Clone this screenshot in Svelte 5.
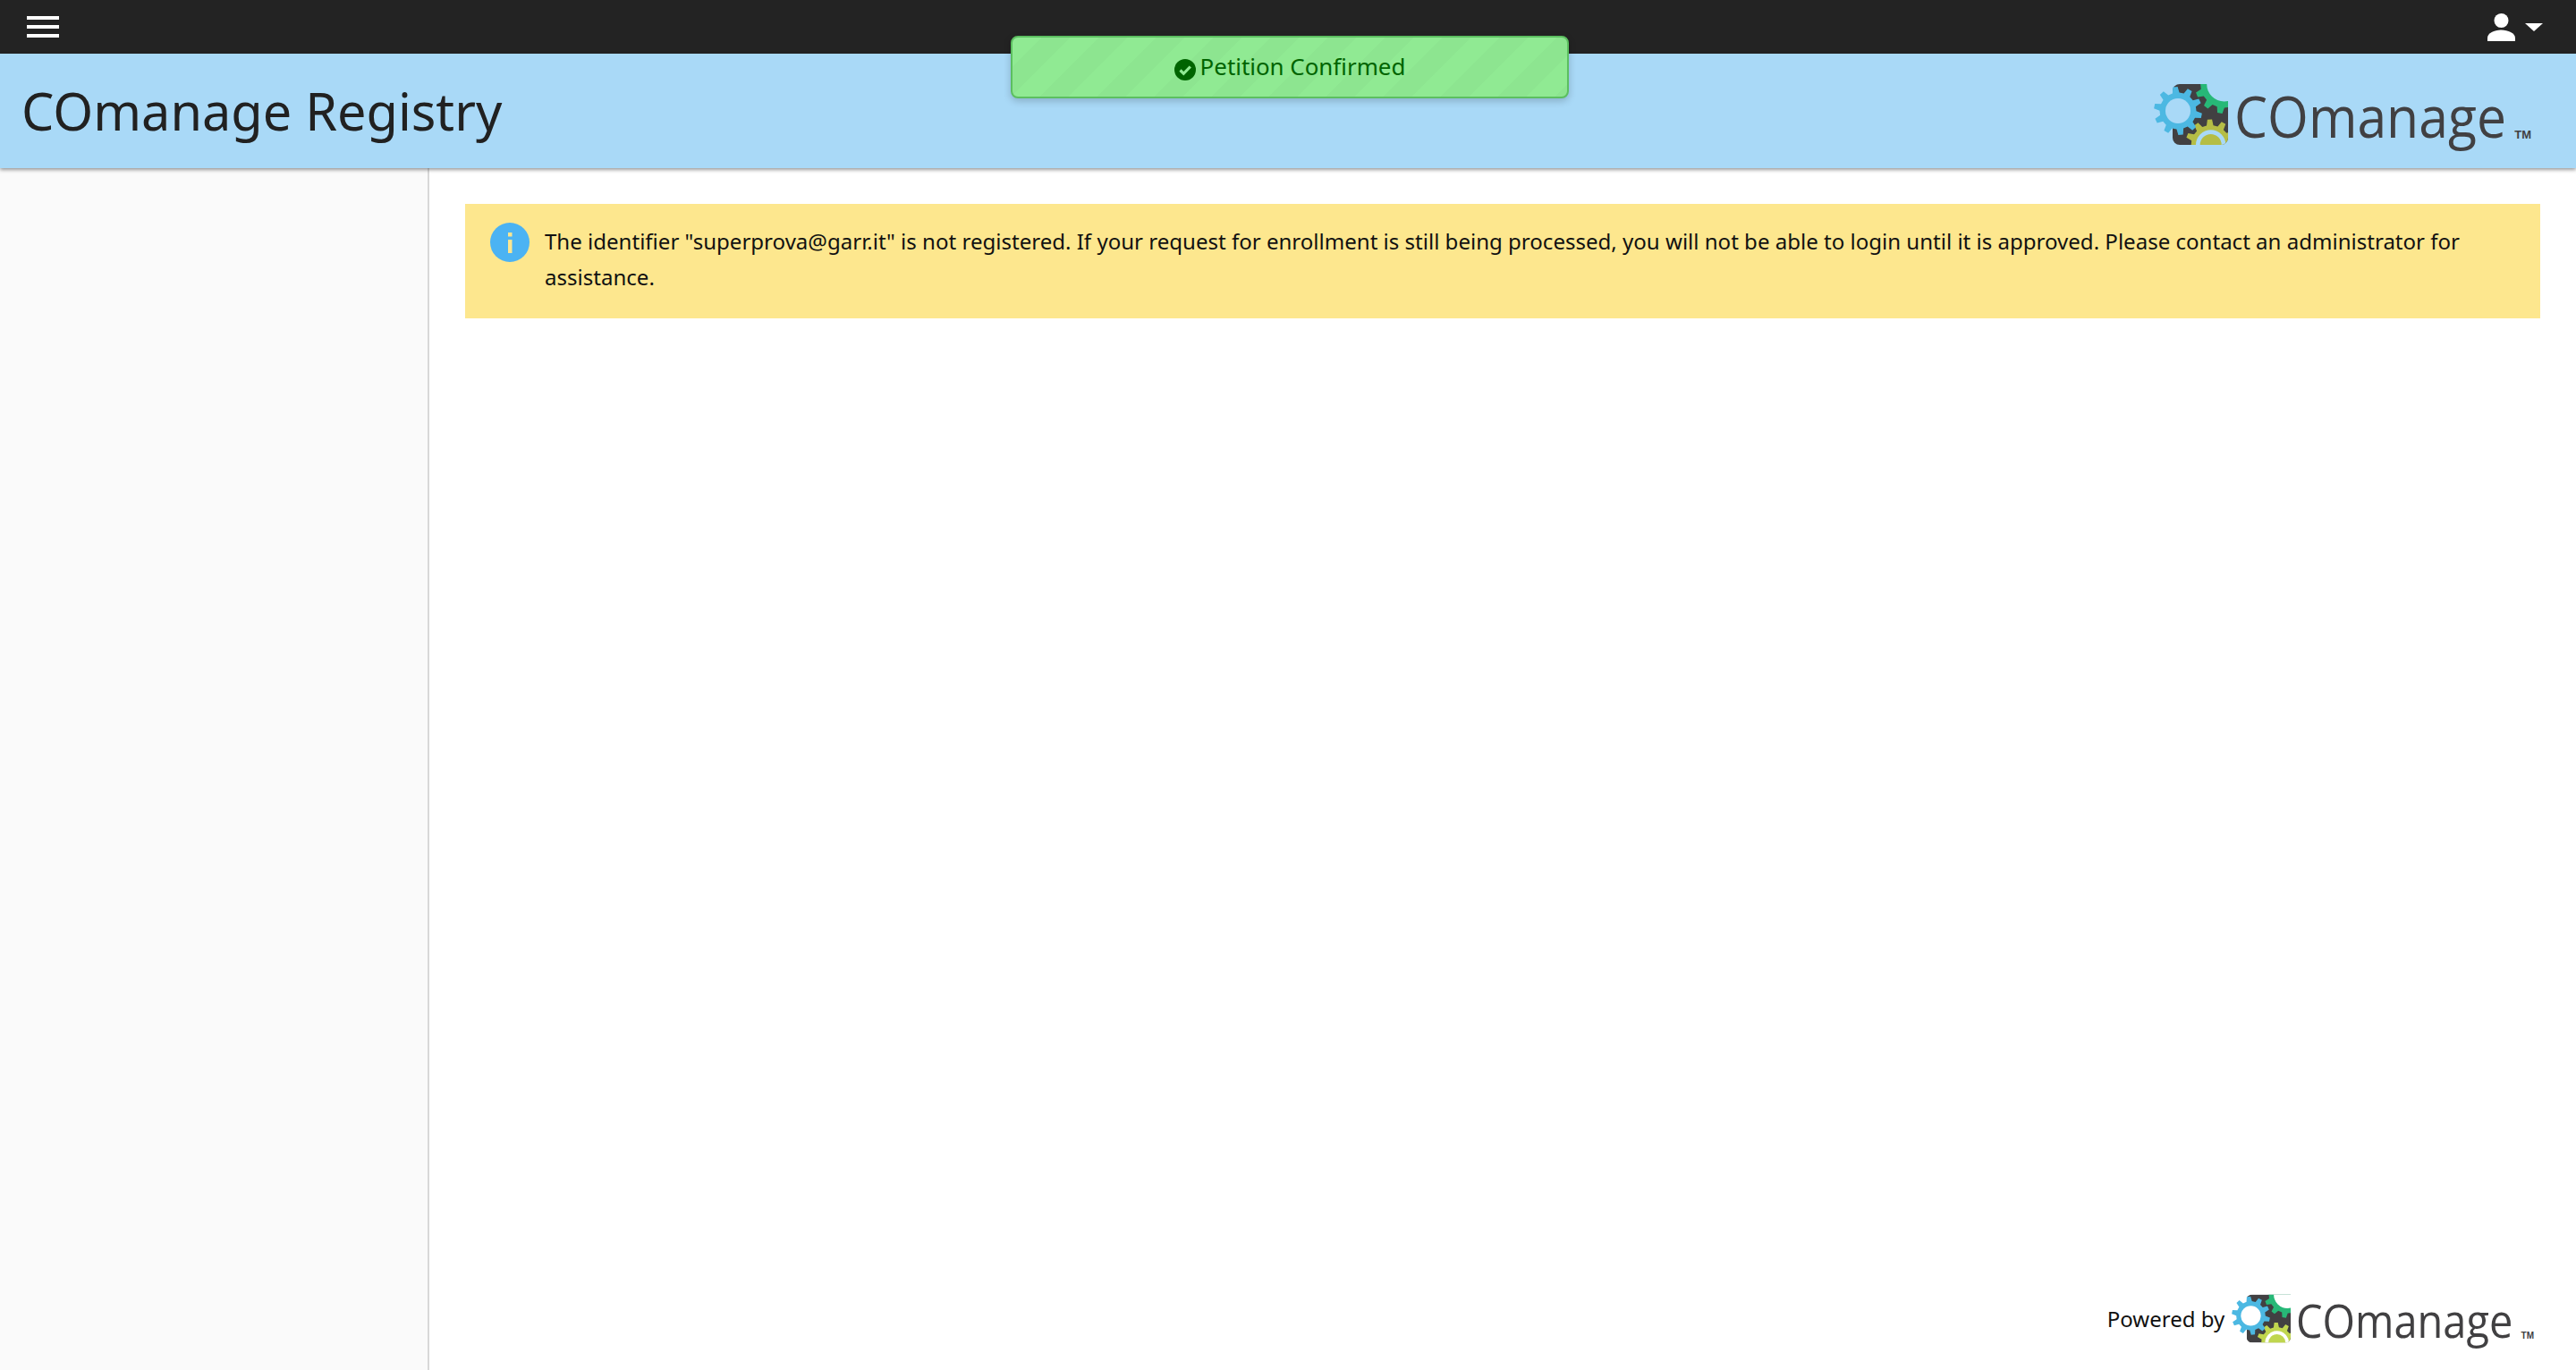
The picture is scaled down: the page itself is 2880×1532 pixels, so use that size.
<script lang="ts">
    // builds a toothed wheel outline for the logo
    function gear(cx: number, cy: number, outer: number, root: number, teeth: number, rot = 0) {
        const pts: string[] = [];
        const step = (Math.PI * 2) / teeth;
        for (let i = 0; i < teeth; i++) {
            const a = rot + i * step;
            const at = [
                [root, -0.3],
                [outer, -0.16],
                [outer, 0.16],
                [root, 0.3],
            ];
            for (const [r, f] of at) {
                const x = cx + r * Math.cos(a + f * step);
                const y = cy + r * Math.sin(a + f * step);
                pts.push(`${x.toFixed(2)},${y.toFixed(2)}`);
            }
        }
        return "M" + pts.join("L") + "Z";
    }

    const blue = gear(27, 30, 27, 20.5, 10, 0.2);
    const green = gear(78.7, 0, 33, 26.5, 12, 0.15);
    const yellow = gear(63.7, 68, 28.5, 22, 11, 0.1);
</script>

{#snippet logo(hole: string, olive: string)}
    <svg class="mark" viewBox="0 0 83 68" aria-hidden="true">
        <defs>
            <clipPath id="mark-clip-{hole.slice(1)}">
                <path d="M29 0H83V60a8 8 0 0 1-8 8H29a8 8 0 0 1-8-8V8a8 8 0 0 1 8-8Z" />
            </clipPath>
        </defs>
        <g clip-path="url(#mark-clip-{hole.slice(1)})">
            <rect x="21" y="0" width="62" height="68" fill="#414042" />
            <path d={green} fill="#27b877" />
            <circle cx="78.7" cy="0" r="19.5" fill={hole} />
            <path d={yellow} fill={olive} />
            <circle cx="63.7" cy="68" r="16.7" fill={hole} />
            <circle cx="63.7" cy="68" r="12" fill={olive} />
        </g>
        <path d={blue} fill="#4cb8e2" />
        <circle cx="27" cy="30" r="14" fill={hole} />
    </svg>
{/snippet}

<div class="page">
    <div class="topbar">
        <button class="menu" aria-label="Menu">
            <span></span><span></span><span></span>
        </button>
        <button class="user" aria-label="User menu">
            <svg class="person" viewBox="0 0 31 31" aria-hidden="true">
                <circle cx="15.5" cy="8" r="8" fill="#fff" />
                <path d="M0 31v-3.5C0 22 8 18.5 15.5 18.5S31 22 31 27.500V31Z" fill="#fff" />
            </svg>
            <span class="caret"></span>
        </button>
    </div>

    <header class="banner">
        <h1>COmanage Registry</h1>
        <div class="logo big">
            {@render logo("#a9d9f7", "#b5bd45")}
            <span class="word">COmanage</span>
            <span class="tm">TM</span>
        </div>
    </header>

    <div class="content">
        <aside class="sidebar"></aside>
        <main>
            <div class="notice">
                <svg class="info" viewBox="0 0 44 44" aria-hidden="true">
                    <circle cx="22" cy="22" r="22" fill="#4bb3f3" />
                    <rect x="20" y="11" width="4.500" height="4.500" fill="#fde68f" />
                    <rect x="20" y="19" width="4.500" height="15" fill="#fde68f" />
                </svg>
                <p>The identifier "superprova@garr.it" is not registered. If your request for enrollment is still being processed, you will not be able to login until it is approved. Please contact an administrator for assistance.</p>
            </div>
            <footer>
                <span class="powered">Powered by</span>
                <div class="logo small">
                    {@render logo("#ffffff", "#c0d64f")}
                    <span class="word">COmanage</span>
                    <span class="tm">TM</span>
                </div>
            </footer>
        </main>
    </div>

    <div class="toast">
        <svg class="check" viewBox="0 0 24 24" aria-hidden="true">
            <circle cx="12" cy="12" r="12" fill="#006400" />
            <path d="M6.500 12.500l3.800 3.800 7.500-7.800" fill="none" stroke="#90ea93" stroke-width="3.200" />
        </svg>
        <span>Petition Confirmed</span>
    </div>
</div>

<style>
    :global(body) {
        margin: 0;
        background: #fff;
    }

    .page {
        position: relative;
        display: flex;
        flex-direction: column;
        height: 1532px;
        overflow: hidden;
        font-family: "Noto Sans", sans-serif;
        color: #212121;
    }

    button {
        background: none;
        border: none;
        padding: 0;
        cursor: pointer;
    }

    .topbar {
        flex: 0 0 60px;
        display: flex;
        align-items: center;
        justify-content: space-between;
        padding: 0 37px 0 30px;
        background: #232323;
    }

    .menu {
        display: flex;
        flex-direction: column;
        justify-content: space-between;
        width: 36px;
        height: 24px;
    }

    .menu span {
        display: block;
        height: 4px;
        background: #fff;
    }

    .user {
        display: flex;
        align-items: center;
        gap: 11px;
    }

    .person {
        width: 31px;
        height: 31px;
    }

    .caret {
        width: 0;
        height: 0;
        border-left: 10px solid transparent;
        border-right: 10px solid transparent;
        border-top: 9px solid #fff;
        margin-top: 1px;
    }

    .banner {
        flex: 0 0 128px;
        display: flex;
        align-items: center;
        justify-content: space-between;
        padding: 0 50px 0 24px;
        background: #a9d9f7;
        box-shadow: 0 2px 4px rgba(0, 0, 0, 0.4);
        position: relative;
        z-index: 1;
    }

    h1 {
        margin: 0;
        font-size: 57.6px;
        font-weight: 400;
        line-height: 1;
    }

    .logo {
        display: flex;
        align-items: flex-start;
        color: #414042;
    }

    .logo .word {
        font-family: "Open Sans", sans-serif;
        transform-origin: left center;
        transform: scaleX(0.92);
    }

    .big {
        margin-top: 10px;
    }

    .big .mark {
        width: 83px;
        height: 68px;
    }

    .big .word {
        font-size: 64px;
        line-height: 68px;
        margin-left: 7px;
        margin-top: 2px;
        margin-right: -25px;
    }

    .tm {
        font-family: "Liberation Sans", sans-serif;
        font-weight: 700;
    }

    .big .tm {
        font-size: 13px;
        margin: 49px 0 0 8px;
    }

    .content {
        flex: 1;
        display: flex;
        min-height: 0;
    }

    .sidebar {
        flex: 0 0 478px;
        background: #fafafa;
        border-right: 2px solid #d8d8d8;
    }

    main {
        flex: 1;
        display: flex;
        flex-direction: column;
        padding: 40px 40px 28px 40px;
    }

    .notice {
        display: flex;
        gap: 17px;
        padding: 22px 28px 26px 28px;
        background: #fde78e;
        font-size: 24.06px;
        line-height: 40px;
        color: #111;
    }

    .info {
        flex: 0 0 44px;
        width: 44px;
        height: 44px;
        margin-top: -1px;
    }

    .notice p {
        margin: 0;
    }

    footer {
        margin-top: auto;
        display: flex;
        align-items: center;
        justify-content: flex-end;
        gap: 8px;
        margin-right: 7px;
    }

    .powered {
        font-size: 24px;
        color: #111;
        margin-bottom: 3px;
    }

    .small .mark {
        width: 66px;
        height: 55px;
    }

    .small .word {
        font-size: 51px;
        line-height: 55px;
        margin-left: 6px;
        margin-top: 2px;
        margin-right: -19px;
    }

    .small .tm {
        font-size: 10px;
        margin: 41px 0 0 7px;
    }

    .toast {
        position: absolute;
        top: 40px;
        left: 1130px;
        width: 624px;
        height: 70px;
        box-sizing: border-box;
        z-index: 2;
        display: flex;
        align-items: center;
        justify-content: center;
        gap: 5px;
        padding-bottom: 2px;
        border: 2px solid #5cbf60;
        border-radius: 8px;
        background-color: #90ea93;
        background-image: linear-gradient(
            -45deg,
            rgba(0, 0, 0, 0.02) 25%,
            transparent 25%,
            transparent 50%,
            rgba(0, 0, 0, 0.02) 50%,
            rgba(0, 0, 0, 0.02) 75%,
            transparent 75%
        );
        background-size: 64px 64px;
        box-shadow: 0 3px 8px rgba(0, 0, 0, 0.2);
        color: #006400;
        font-size: 25.9px;
    }

    .check {
        width: 24px;
        height: 24px;
        margin-top: 7px;
    }
</style>
